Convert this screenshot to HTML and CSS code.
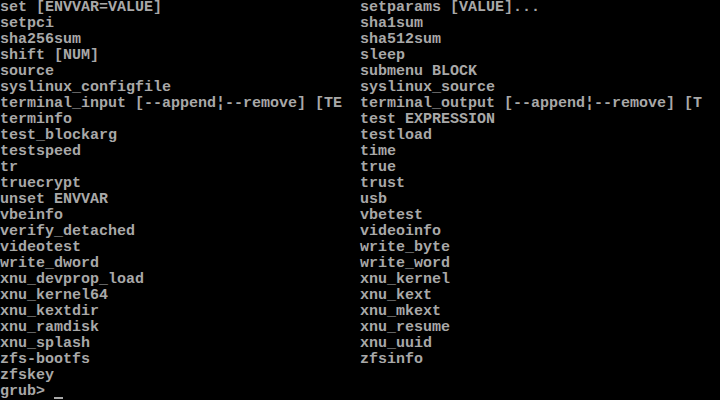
FILE: index.html
```html
<!DOCTYPE html>
<html>
<head>
<meta charset="utf-8">
<link rel="stylesheet" href="styles.css">
</head>
<body>
<div class="term">
<div class="grid">
<span>set [ENVVAR=VALUE]</span><span>setparams [VALUE]...</span>
<span>setpci</span><span>sha1sum</span>
<span>sha256sum</span><span>sha512sum</span>
<span>shift [NUM]</span><span>sleep</span>
<span>source</span><span>submenu BLOCK</span>
<span>syslinux_configfile</span><span>syslinux_source</span>
<span>terminal_input [--append¦--remove] [TE</span><span>terminal_output [--append¦--remove] [T</span>
<span>terminfo</span><span>test EXPRESSION</span>
<span>test_blockarg</span><span>testload</span>
<span>testspeed</span><span>time</span>
<span>tr</span><span>true</span>
<span>truecrypt</span><span>trust</span>
<span>unset ENVVAR</span><span>usb</span>
<span>vbeinfo</span><span>vbetest</span>
<span>verify_detached</span><span>videoinfo</span>
<span>videotest</span><span>write_byte</span>
<span>write_dword</span><span>write_word</span>
<span>xnu_devprop_load</span><span>xnu_kernel</span>
<span>xnu_kernel64</span><span>xnu_kext</span>
<span>xnu_kextdir</span><span>xnu_mkext</span>
<span>xnu_ramdisk</span><span>xnu_resume</span>
<span>xnu_splash</span><span>xnu_uuid</span>
<span>zfs-bootfs</span><span>zfsinfo</span>
<span>zfskey</span><span></span>
</div>
<div class="prompt"><span class="line">grub&gt; </span><span class="cursor"></span></div>
</div>
</body>
</html>
```
FILE: styles.css
```css
html, body {
  margin: 0;
  padding: 0;
  background: #000;
  width: 720px;
  height: 400px;
  overflow: hidden;
}
.term {
  font-family: "Liberation Mono", monospace;
  font-size: 15px;
  font-weight: bold;
  line-height: 16px;
  color: #a8a8a8;
}
.grid {
  display: grid;
  grid-template-columns: 360px 360px;
  grid-auto-rows: 16px;
}
.grid span, .line {
  white-space: pre;
}
.prompt {
  display: flex;
  height: 16px;
}
.cursor {
  width: 9px;
  height: 2px;
  margin-top: 13px;
  background: #a8a8a8;
}
```
